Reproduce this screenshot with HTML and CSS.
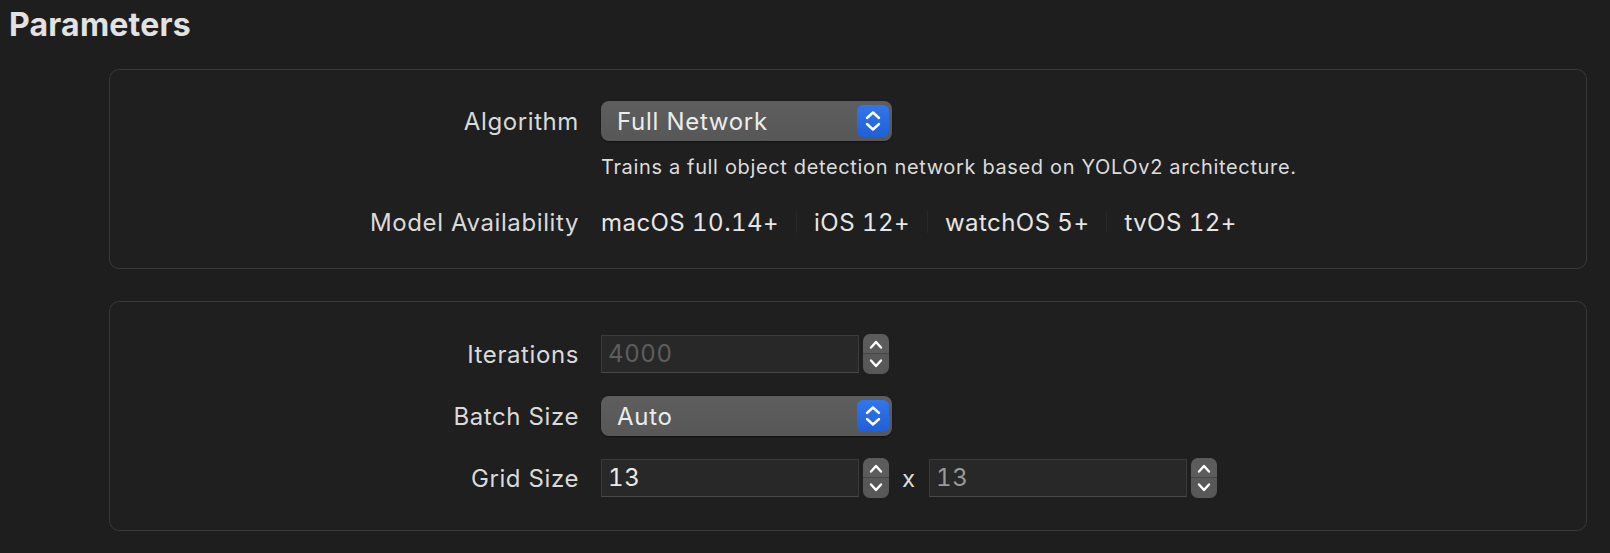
FILE: index.html
```html
<!DOCTYPE html>
<html>
<head>
<meta charset="utf-8">
<link rel="stylesheet" href="styles.css">
</head>
<body>
<h1 class="title">Parameters</h1>

<section class="box box-algo">
  <div class="row row-main">
    <div class="label">Algorithm</div>
    <div class="popup">
      <span class="popup-text">Full Network</span>
      <span class="popup-btn">
        <svg width="32" height="32" viewBox="0 0 32 32"><polyline points="10,13 16,7.5 22,13" /><polyline points="10,19 16,24.5 22,19" /></svg>
      </span>
    </div>
  </div>
  <div class="row row-desc">
    <div class="label"></div>
    <div class="desc">Trains a full object detection network based on YOLOv2 architecture.</div>
  </div>
  <div class="row row-avail">
    <div class="label">Model Availability</div>
    <div class="avail">
      <span>macOS 10.14+</span><span class="sep"></span>
      <span>iOS 12+</span><span class="sep"></span>
      <span>watchOS 5+</span><span class="sep"></span>
      <span>tvOS 12+</span>
    </div>
  </div>
</section>

<section class="box box-params">
  <div class="row row-main">
    <div class="label">Iterations</div>
    <div class="field placeholder">4000</div>
    <div class="stepper">
      <svg width="26" height="40" viewBox="0 0 26 40"><polyline points="8,13.5 13,8 18,13.5" /><polyline points="8,26.5 13,32 18,26.5" /></svg>
    </div>
  </div>
  <div class="row row-main gap">
    <div class="label">Batch Size</div>
    <div class="popup">
      <span class="popup-text">Auto</span>
      <span class="popup-btn">
        <svg width="32" height="32" viewBox="0 0 32 32"><polyline points="10,13 16,7.5 22,13" /><polyline points="10,19 16,24.5 22,19" /></svg>
      </span>
    </div>
  </div>
  <div class="row row-main gap">
    <div class="label">Grid Size</div>
    <div class="field">13</div>
    <div class="stepper">
      <svg width="26" height="40" viewBox="0 0 26 40"><polyline points="8,13.5 13,8 18,13.5" /><polyline points="8,26.5 13,32 18,26.5" /></svg>
    </div>
    <span class="times">x</span>
    <div class="field dim">13</div>
    <div class="stepper">
      <svg width="26" height="40" viewBox="0 0 26 40"><polyline points="8,13.5 13,8 18,13.5" /><polyline points="8,26.5 13,32 18,26.5" /></svg>
    </div>
  </div>
</section>
</body>
</html>
```

FILE: styles.css
```css
* { box-sizing: border-box; }
html, body {
  margin: 0;
  padding: 0;
  background: #1e1e1e;
  font-family: Inter, "Noto Sans", "Liberation Sans", sans-serif;
  color: #e0e0e0;
}
.title {
  margin: 0 0 24px 0;
  padding: 5px 0 0 9px;
  font-size: 32px;
  line-height: 40px;
  font-weight: 700;
  color: #e2e2e2;
  letter-spacing: 0.2px;
}
.box {
  margin: 0 23px 0 109px;
  border: 1px solid #393939;
  border-radius: 10px;
  background: #1f1f1f;
  padding: 31px 0;
}
.box-params {
  margin-top: 32px;
  padding: 32px 0;
}
.row {
  display: flex;
  align-items: center;
}
.row-main { height: 40px; }
.row.gap { margin-top: 22px; }
.row-desc { height: 24px; margin-top: 14px; }
.row-avail { height: 30px; margin-top: 28px; }
.label {
  width: 469px;
  flex: none;
  margin-right: 22px;
  text-align: right;
  font-size: 24px;
  letter-spacing: 0.6px;
  color: #dadada;
}
.popup {
  width: 291px;
  height: 40px;
  border-radius: 8px;
  background: linear-gradient(#5e5e5e, #575757);
  box-shadow: 0 0.5px 1.5px rgba(0,0,0,0.5);
  display: flex;
  align-items: center;
  justify-content: space-between;
  padding: 0 3px 0 16px;
}
.popup-text {
  font-size: 24px;
  letter-spacing: 0.7px;
  color: #ececec;
}
.popup-btn {
  width: 32px;
  height: 32px;
  border-radius: 6px;
  background: linear-gradient(#3276ec, #1f60d8);
  display: flex;
}
.popup-btn polyline, .stepper polyline {
  fill: none;
  stroke: #ffffff;
  stroke-width: 2.4;
  stroke-linecap: round;
  stroke-linejoin: round;
}
.desc {
  font-size: 20px;
  letter-spacing: 0.65px;
  color: #dcdcdc;
}
.avail {
  display: flex;
  align-items: center;
  font-size: 24px;
  letter-spacing: 0.45px;
  font-feature-settings: "tnum";
  color: #e6e6e6;
}
.sep {
  width: 1px;
  height: 22px;
  background: #282828;
  margin: 0 17px;
}
.field {
  width: 258px;
  height: 38px;
  background: #282828;
  border: 1px solid #3b3b3b;
  border-bottom-color: #4a4a4a;
  padding-left: 6px;
  font-size: 24px;
  letter-spacing: 0.6px;
  font-feature-settings: "tnum";
  line-height: 36px;
  color: #ececec;
}
.field.placeholder { color: #5e5e5e; }
.field.dim { color: #9a9a9a; }
.stepper {
  width: 26px;
  height: 40px;
  margin-left: 4px;
  border-radius: 7px;
  background: linear-gradient(#5c5c5c 0, #5c5c5c 19.5px, #464646 19.5px, #464646 20.5px, #585858 20.5px);
  display: flex;
}
.times {
  font-size: 24px;
  color: #dcdcdc;
  margin: 0 14px 0 13px;
}
```
